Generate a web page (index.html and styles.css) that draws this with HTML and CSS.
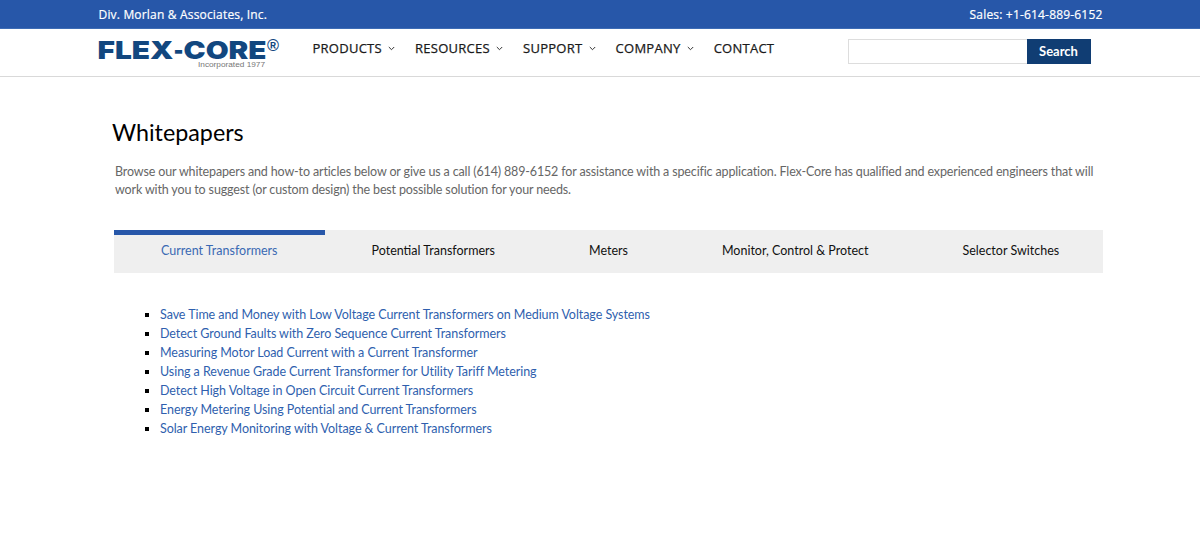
FILE: index.html
```html
<!DOCTYPE html>
<html lang="en">
<head>
  <meta charset="UTF-8">
  <meta name="viewport" content="width=device-width, initial-scale=1.0">
  <title>Whitepapers | Flex-Core</title>
  <link rel="stylesheet" href="styles.css">
</head>
<body>
  <!-- Top bar -->
  <div class="top-bar">
    <div class="top-inner">
      <span>Div. Morlan &amp; Associates, Inc.</span>
      <span>Sales: +1-614-889-6152</span>
    </div>
  </div>

  <!-- Logo, menu and search -->
  <header class="header">
    <div class="header-inner">
      <a class="logo" href="#">
        <svg width="184" height="34" viewBox="0 0 184 34">
          <text class="logo-name" y="22.5"><tspan x="-0.5" textLength="76" lengthAdjust="spacingAndGlyphs">FLEX</tspan><tspan x="75.5" textLength="10" lengthAdjust="spacingAndGlyphs">-</tspan><tspan x="85.5" textLength="83" lengthAdjust="spacingAndGlyphs">CORE</tspan></text>
          <text class="logo-reg" x="169" y="15" textLength="12" lengthAdjust="spacingAndGlyphs">®</text>
          <text class="logo-sub" x="100" y="31" textLength="67" lengthAdjust="spacingAndGlyphs">Incorporated 1977</text>
        </svg>
      </a>
      <nav class="menu">
        <a href="#">PRODUCTS <svg class="arrow" viewBox="0 0 7 5"><path d="M.8 1l2.7 2.7L6.2 1"/></svg></a>
        <a href="#">RESOURCES <svg class="arrow" viewBox="0 0 7 5"><path d="M.8 1l2.7 2.7L6.2 1"/></svg></a>
        <a href="#">SUPPORT <svg class="arrow" viewBox="0 0 7 5"><path d="M.8 1l2.7 2.7L6.2 1"/></svg></a>
        <a href="#">COMPANY <svg class="arrow" viewBox="0 0 7 5"><path d="M.8 1l2.7 2.7L6.2 1"/></svg></a>
        <a href="#">CONTACT</a>
      </nav>
      <form class="search">
        <input type="text" aria-label="Search">
        <button type="button">Search</button>
      </form>
    </div>
  </header>

  <main class="content">
    <h1>Whitepapers</h1>
    <p class="intro">Browse our whitepapers and how-to articles below or give us a call (614) 889-6152 for assistance with a specific application. Flex-Core has qualified and experienced engineers that will work with you to suggest (or custom design) the best possible solution for your needs.</p>

    <div class="tabs">
      <a class="tab active" href="#">Current Transformers</a>
      <a class="tab" href="#">Potential Transformers</a>
      <a class="tab" href="#">Meters</a>
      <a class="tab" href="#">Monitor, Control &amp; Protect</a>
      <a class="tab" href="#">Selector Switches</a>
    </div>

    <ul class="papers">
      <li><a href="#">Save Time and Money with Low Voltage Current Transformers on Medium Voltage Systems</a></li>
      <li><a href="#">Detect Ground Faults with Zero Sequence Current Transformers</a></li>
      <li><a href="#">Measuring Motor Load Current with a Current Transformer</a></li>
      <li><a href="#">Using a Revenue Grade Current Transformer for Utility Tariff Metering</a></li>
      <li><a href="#">Detect High Voltage in Open Circuit Current Transformers</a></li>
      <li><a href="#">Energy Metering Using Potential and Current Transformers</a></li>
      <li><a href="#">Solar Energy Monitoring with Voltage &amp; Current Transformers</a></li>
    </ul>
  </main>
</body>
</html>
```
FILE: styles.css
```css
* {
  box-sizing: border-box;
}

body {
  margin: 0;
  background: #fff;
  font-family: Lato, sans-serif;
  font-size: 12.5px;
}

a {
  text-decoration: none;
}

/* Top bar */
.top-bar {
  height: 29px;
  background: #2757a9;
  border-bottom: 1px solid #3d6cb5;
}

.top-inner {
  display: flex;
  justify-content: space-between;
  width: 1005px;
  margin: 0 auto;
  padding-left: 1px;
  font-family: "Open Sans", sans-serif;
  font-size: 12px;
  line-height: 29px;
  letter-spacing: 0.18px;
  color: #fff;
  -webkit-text-stroke: 0.2px #fff;
}

/* Header */
.header {
  height: 48px;
  border-bottom: 1px solid #d9d9d9;
}

.header-inner {
  display: flex;
  width: 1005px;
  margin: 0 auto;
}

.logo {
  width: 184px;
  height: 34px;
  margin-top: 7px;
}

.logo svg {
  display: block;
}

.logo-name {
  font: 900 25px Inter, sans-serif;
  fill: #12477f;
}

.logo-reg {
  font: bold 16px "Liberation Sans", sans-serif;
  fill: #12477f;
}

.logo-sub {
  font: 7.5px "Liberation Sans", sans-serif;
  fill: #777;
}

.menu {
  display: flex;
  gap: 20px;
  margin: 9px 0 0 31px;
  font-family: "Open Sans", sans-serif;
  font-size: 13px;
  line-height: 20px;
  letter-spacing: 0.26px;
  -webkit-text-stroke: 0.25px #1a1a1a;
}

.menu a {
  color: #1a1a1a;
  white-space: nowrap;
}

.arrow {
  width: 7px;
  height: 5px;
  margin-left: 2.5px;
  vertical-align: 2px;
  fill: none;
  stroke: #333;
}

.search {
  display: flex;
  height: 25px;
  margin: 10px 12px 0 auto;
}

.search input {
  width: 179px;
  padding: 0 6px;
  border: 1px solid #ddd;
  border-right: 0;
}

.search button {
  width: 64px;
  padding: 0 0 1px;
  border: 0;
  background: #103d73;
  color: #fff;
  font: bold 13px Lato, sans-serif;
}

/* Page content */
.content {
  width: 989px;
  margin: 0 83px 0 114px;
}

h1 {
  margin: 40px 0 0 -2px;
  font-size: 23.3px;
  font-weight: 400;
  line-height: 30px;
  color: #000;
}

.intro {
  margin: 16px 0 32px 1px;
  line-height: 17.5px;
  letter-spacing: -0.145px;
  color: #666;
}

.tabs {
  display: flex;
  justify-content: space-between;
  height: 43px;
  background: #efefef;
}

.tab {
  padding: 0 47px;
  border-top: 5px solid transparent;
  line-height: 31px;
  color: #111;
  white-space: nowrap;
}

.tab.active {
  border-top-color: #2757a9;
  color: #3a69b3;
}

.papers {
  margin: 32px 0 0;
  padding-left: 46px;
  list-style: square;
  line-height: 19px;
  letter-spacing: -0.06px;
  color: #000;
}

.papers a {
  color: #2f5fae;
}
```
